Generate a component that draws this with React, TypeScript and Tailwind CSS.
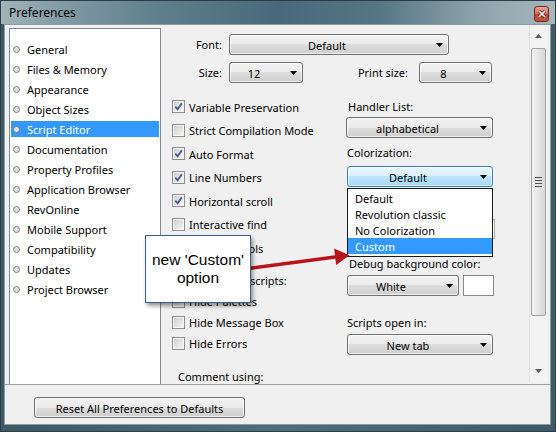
import React from 'react'

// Пункты списка слева
const SECTIONS = [
  'General',
  'Files & Memory',
  'Appearance',
  'Object Sizes',
  'Script Editor',
  'Documentation',
  'Property Profiles',
  'Application Browser',
  'RevOnline',
  'Mobile Support',
  'Compatibility',
  'Updates',
  'Project Browser',
]

const btnBg =
  'border-[#707070] bg-[linear-gradient(#f2f2f2,#ebebeb_50%,#dddddd_50%,#cfcfcf)] shadow-[inset_0_0_0_1px_rgba(255,255,255,0.7)]'
const btnFocus =
  'border-[#3c7fb1] bg-[linear-gradient(#eaf6fd,#d9f0fc_50%,#bee6fd_50%,#a7d9f5)] shadow-[inset_0_0_0_1px_rgba(255,255,255,0.6)]'

const Tri = () => (
  <svg width="7" height="4" viewBox="0 0 7 4">
    <path d="M0 0H7L3.5 4Z" fill="#000" />
  </svg>
)

const Dropdown = ({ label, className, focused }: { label: string; className: string; focused?: boolean }) => (
  <div className={`flex h-[21px] items-center rounded-[3px] border ${focused ? btnFocus : btnBg} ${className}`}>
    <span className="flex-1 pr-[12px] pt-px text-center leading-none">{label}</span>
    <span className="mr-[5px] flex">
      <Tri />
    </span>
  </div>
)

const Check = ({ checked }: { checked?: boolean }) => (
  <span className="flex h-[13px] w-[13px] shrink-0 items-center justify-center border border-[#8e8f8f] bg-white">
    <span className="flex h-[11px] w-[11px] items-center justify-center border border-[#f4f4f4] bg-[linear-gradient(135deg,#cfcfcf,#f6f6f6)]">
      {checked && (
        <svg width="9" height="9" viewBox="0 0 9 9">
          <path d="M1.3 4.6L3.6 7.2L7.8 1.4" fill="none" stroke="#4a5e8c" strokeWidth="1.8" />
        </svg>
      )}
    </span>
  </span>
)

const CheckRow = ({ label, checked, className }: { label: string; checked?: boolean; className: string }) => (
  <div className={`flex items-center gap-[4px] ${className}`}>
    <Check checked={checked} />
    <span className="pt-px leading-none">{label}</span>
  </div>
)

const CloseBtn = () => (
  <div className="mt-[5px] flex h-[16px] w-[15px] items-center justify-center self-start rounded-[3px] border border-[#6b2a20] bg-[linear-gradient(#e9a393,#d2705c_50%,#c0432d_50%,#c9553b)]">
    <svg width="8" height="8" viewBox="0 0 8 8">
      <path d="M1 1L7 7M7 1L1 7" stroke="#4a1a12" strokeWidth="3" />
      <path d="M1 1L7 7M7 1L1 7" stroke="#fff" strokeWidth="1.6" />
    </svg>
  </div>
)

const Scrollbar = () => (
  <div className="mb-[2px] mr-[3px] flex w-[18px] flex-col border-l border-[#e3e3e3] bg-[#f3f3f3]">
    <div className="flex h-[22px] items-center justify-center">
      <svg width="7" height="4" viewBox="0 0 7 4">
        <path d="M0 4H7L3.5 0Z" fill="#5a5a5a" />
      </svg>
    </div>
    <div className="mx-[1px] mt-[1px] flex h-[268px] items-center justify-center rounded-[2px] border border-[#a2a2a2] bg-[linear-gradient(90deg,#f4f4f4,#e6e6e6_45%,#d7d7d7)]">
      <div className="flex flex-col gap-[2px]">
        <span className="h-px w-[7px] bg-[#4f4f4f]" />
        <span className="h-px w-[7px] bg-[#4f4f4f]" />
        <span className="h-px w-[7px] bg-[#4f4f4f]" />
        <span className="h-px w-[7px] bg-[#4f4f4f]" />
      </div>
    </div>
    <div className="flex-1" />
    <div className="flex h-[22px] items-center justify-center">
      <svg width="7" height="4" viewBox="0 0 7 4">
        <path d="M0 0H7L3.5 4Z" fill="#5a5a5a" />
      </svg>
    </div>
  </div>
)

export default function App() {
  return (
    <div className="relative flex h-[432px] w-[556px] flex-col overflow-hidden border border-[#2b3c45] bg-[linear-gradient(90deg,#3f5966,#4f6d7b_50%,#3f5966)] font-['Noto_Sans',sans-serif] text-[11px] text-black">
      {/* Заголовок окна */}
      <div className="flex h-[23px] items-center justify-between bg-[linear-gradient(90deg,#a3b4ba_0%,#849ca6_10%,#5f7f8c_28%,#48697a_50%,#557584_68%,#8ea4ac_86%,#a5b6bc_100%)] pl-[8px] pr-[6px]">
        <span className="pt-px text-[12px] leading-none text-black">Preferences</span>
        <CloseBtn />
      </div>

      {/* Клиентская область */}
      <div className="mb-[6px] ml-[3px] mr-[4px] flex flex-1 flex-col border border-[#8c9ca3] bg-[#f0f0f0]">
        <div className="flex h-[360px] border-b border-[#a0a0a0]">
          {/* Список разделов */}
          <div className="ml-[4px] mt-[3px] w-[152px] border-l border-r border-t border-[#828790] bg-white px-[1px] pt-[10px]">
            {SECTIONS.map((s) => {
              const sel = s === 'Script Editor'
              return (
                <div key={s} className="flex h-[20px] items-center">
                  <div className={`flex h-[16px] w-full items-center ${sel ? 'bg-[#3399ff] text-white' : ''}`}>
                    <span className="ml-[2px] h-[7px] w-[7px] rounded-full border border-[#7d7d7d] bg-[#e2e2e2]" />
                    <span className="ml-[7px] pt-px leading-none">{s}</span>
                  </div>
                </div>
              )
            })}
          </div>

          {/* Панель настроек редактора */}
          <div className="flex flex-1 overflow-hidden">
            <div className="flex-1 overflow-hidden pt-[9px]">
              <div className="flex items-center">
                <span className="w-[61px] pt-px text-right">Font:</span>
                <Dropdown label="Default" className="ml-[7px] w-[220px]" />
              </div>
              <div className="mt-[7px] flex items-center">
                <span className="w-[61px] pt-px text-right">Size:</span>
                <Dropdown label="12" className="ml-[7px] w-[74px]" />
                <span className="w-[105px] pt-px text-right">Print size:</span>
                <Dropdown label="8" className="ml-[11px] w-[73px]" />
              </div>

              <div className="mt-[12px] flex">
                {/* Левая колонка */}
                <div className="flex w-[185px] flex-col pl-[11px]">
                  <CheckRow label="Variable Preservation" checked className="h-[23.5px]" />
                  <CheckRow label="Strict Compilation Mode" className="h-[23.5px]" />
                  <CheckRow label="Auto Format" checked className="h-[23.5px]" />
                  <CheckRow label="Line Numbers" checked className="h-[23.5px]" />
                  <CheckRow label="Horizontal scroll" checked className="h-[23.5px]" />
                  <CheckRow label="Interactive find" className="h-[23.5px]" />
                  <CheckRow label="Show Symbols" className="h-[23.5px]" />
                  <div className="mt-[11px] flex h-[20px] items-center pl-[6px] pt-px">When editing scripts:</div>
                  <CheckRow label="Hide Palettes" className="h-[21px]" />
                  <CheckRow label="Hide Message Box" className="h-[21px]" />
                  <CheckRow label="Hide Errors" className="h-[21px]" />
                  <div className="mt-[13px] flex h-[20px] items-center pl-[6px] pt-px">Comment using:</div>
                </div>

                {/* Правая колонка */}
                <div className="flex w-[148px] flex-col pt-[2px]">
                  <div className="flex h-[20px] items-center pl-[2px] pt-px">Handler List:</div>
                  <Dropdown label="alphabetical" className="w-[147px]" />
                  <div className="mt-[5px] flex h-[20px] items-center pl-[1px] pt-px">Colorization:</div>
                  <Dropdown label="Default" focused className="ml-[1px] mt-[3px] w-[146px]" />
                  <div className="ml-[1px] mt-[32px] h-[20px] w-[148px] border border-[#abadb3] bg-white" />
                  <div className="mt-[15px] flex h-[20px] items-center pl-[3px] pt-px">Debug background color:</div>
                  <div className="ml-[1px] mt-[1px] flex items-center gap-[4px]">
                    <Dropdown label="White" className="w-[112px]" />
                    <div className="h-[21px] w-[31px] border border-[#8a8a8a] bg-white" />
                  </div>
                  <div className="mt-[17px] flex h-[20px] items-center pl-[1px] pt-px">Scripts open in:</div>
                  <Dropdown label="New tab" className="ml-[1px] mt-[1px] w-[146px]" />
                </div>
              </div>
            </div>
            <Scrollbar />
          </div>
        </div>

        <div className="pl-[29px] pt-[12px]">
          <div className={`flex h-[21px] w-[211px] items-center justify-center rounded-[3px] border ${btnBg}`}>
            <span className="pt-px leading-none">Reset All Preferences to Defaults</span>
          </div>
        </div>
      </div>

      {/* Раскрытый список Colorization */}
      <div className="absolute left-[346px] top-[187px] w-[146px] border border-[#1a1a1a] bg-white pb-[2px] pt-[1px]">
        {['Default', 'Revolution classic', 'No Colorization', 'Custom'].map((o) => (
          <div
            key={o}
            className={`flex h-[16px] items-center pl-[7px] pt-px leading-none ${o === 'Custom' ? 'bg-[#3399ff] text-white' : ''}`}
          >
            {o}
          </div>
        ))}
      </div>

      {/* Стрелка-указатель */}
      <svg className="pointer-events-none absolute left-[-1px] top-[-1px]" width="556" height="432" viewBox="0 0 556 432">
        <line x1="248" y1="268.5" x2="337" y2="256.8" stroke="#b8141c" strokeWidth="3.4" />
        <path d="M349.5 255.3L336.2 264.9L334.1 248.6Z" fill="#b8141c" />
      </svg>

      {/* Выноска */}
      <div className="absolute left-[144px] top-[234px] flex h-[68px] w-[106px] flex-col items-center justify-center border border-[#385d8a] bg-white font-['Liberation_Sans',Arial,sans-serif] text-[15.5px] leading-[18px] text-black shadow-[2px_3px_4px_rgba(0,0,0,0.4)]">
        <span>new 'Custom'</span>
        <span>option</span>
      </div>
    </div>
  )
}
